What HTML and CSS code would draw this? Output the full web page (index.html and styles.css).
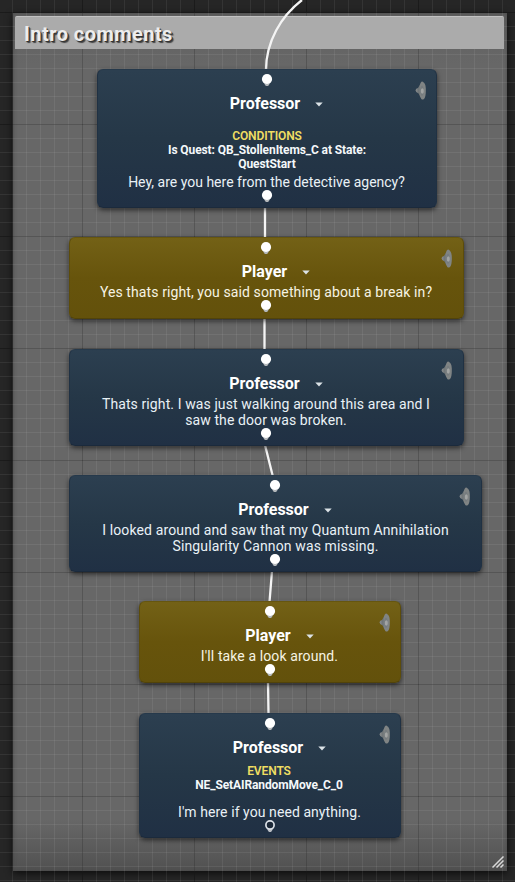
FILE: index.html
```
<!DOCTYPE html>
<html lang="en">
<head>
<meta charset="utf-8">
<title>Dialogue graph</title>
<link rel="stylesheet" href="styles.css">
</head>
<body>
<svg class="defs" width="0" height="0" aria-hidden="true">
  <defs>
    <linearGradient id="metal" x1="0" x2="1"><stop offset="0" stop-color="#8b8e8f"/><stop offset=".5" stop-color="#6c7275"/><stop offset="1" stop-color="#7b7f80"/></linearGradient>
    <symbol id="pin" viewBox="0 0 12 14"><path d="M2 8.500h8L7.600 12.500Q6 13.600 4.400 12.500Z" fill="#b4b8bb"/><circle cx="6" cy="6" r="5.1" fill="#fff"/></symbol>
    <symbol id="pin-open" viewBox="0 0 12 14"><path d="M2.500 9h7L7.500 12.500Q6 13.500 4.500 12.500Z" fill="#b9bec4"/><circle cx="6" cy="6" r="4.1" fill="#1c2938" stroke="#dce2e8" stroke-width="1.7"/></symbol>
    <symbol id="speaker" viewBox="0 0 12 20"><path d="M.5 9.300Q.8 7.300 3 7L5 3.500 7.500.8V18L5 15.500 3.600 12.600Q.8 12 .5 9.300Z" fill="url(#metal)"/><path d="M7.300.6C10.500 2 11 6 10.800 11S9.500 18.600 7.600 18.600 4.500 14.500 4.500 9.500 5.500.3 7.300.6Z" fill="#808484"/><ellipse cx="7" cy="9.800" rx="1.700" ry="5" fill="#767c7f"/><ellipse cx="7.300" cy="10" rx="1.500" ry="2.800" fill="#a3a5a4"/></symbol>
    <symbol id="caret" viewBox="0 0 8 5"><path d="M.3.600h7.400L4 4.500Z" fill="#dce3e7"/></symbol>
  </defs>
</svg>
<main class="graph">
  <section class="comment">
    <h1 class="comment-title">Intro comments</h1>
    <svg class="grip" viewBox="0 0 12 12"><path d="M.5 11.5 11.5.5M4.5 11.5l7-7M8.5 11.5l3-3" stroke="#d8d8d8" stroke-width="1.5"/></svg>
  </section>
  <div class="grid"></div>
  <svg class="wires" viewBox="0 0 515 882">
    <path d="M302 0C281 16 266 42 266 70"/>
    <path d="M265 207V238M264.500 318V350M265 445 273 477M272 571 269.500 602M268 682 268.500 714"/>
  </svg>

  <article class="node professor n1">
    <svg class="pin in"><use href="#pin"/></svg><svg class="speaker"><use href="#speaker"/></svg>
    <h2>Professor<svg class="caret"><use href="#caret"/></svg></h2>
    <div class="meta conditions"><b class="label">CONDITIONS</b><b>Is Quest: QB_StollenItems_C at State:</b><b>QuestStart</b></div>
    <p>Hey, are you here from the detective agency?</p>
    <svg class="pin out"><use href="#pin"/></svg>
  </article>

  <article class="node player n2">
    <svg class="pin in"><use href="#pin"/></svg><svg class="speaker"><use href="#speaker"/></svg>
    <h2>Player<svg class="caret"><use href="#caret"/></svg></h2>
    <p>Yes thats right, you said something about a break in?</p>
    <svg class="pin out"><use href="#pin"/></svg>
  </article>

  <article class="node professor n3">
    <svg class="pin in"><use href="#pin"/></svg><svg class="speaker"><use href="#speaker"/></svg>
    <h2>Professor<svg class="caret"><use href="#caret"/></svg></h2>
    <p>Thats right. I was just walking around this area and I<br>saw the door was broken.</p>
    <svg class="pin out"><use href="#pin"/></svg>
  </article>

  <article class="node professor n4">
    <svg class="pin in"><use href="#pin"/></svg><svg class="speaker"><use href="#speaker"/></svg>
    <h2>Professor<svg class="caret"><use href="#caret"/></svg></h2>
    <p>I looked around and saw that my Quantum Annihilation<br>Singularity Cannon was missing.</p>
    <svg class="pin out"><use href="#pin"/></svg>
  </article>

  <article class="node player n5">
    <svg class="pin in"><use href="#pin"/></svg><svg class="speaker"><use href="#speaker"/></svg>
    <h2>Player<svg class="caret"><use href="#caret"/></svg></h2>
    <p>I'll take a look around.</p>
    <svg class="pin out"><use href="#pin"/></svg>
  </article>

  <article class="node professor n6">
    <svg class="pin in"><use href="#pin"/></svg><svg class="speaker"><use href="#speaker"/></svg>
    <h2>Professor<svg class="caret"><use href="#caret"/></svg></h2>
    <div class="meta events"><b class="label">EVENTS</b><b>NE_SetAIRandomMove_C_0</b></div>
    <p>I'm here if you need anything.</p>
    <svg class="pin out"><use href="#pin-open"/></svg>
  </article>
</main>
</body>
</html>
```
FILE: styles.css
```
* { box-sizing: border-box; }
body { margin: 0; background: #262626; font-family: Roboto, "Liberation Sans", sans-serif; }
.defs { position: absolute; }
.graph {
  position: relative; width: 515px; height: 882px; overflow: hidden;
  background:
    linear-gradient(90deg, #141414 1px, transparent 1px) 82px 0 / 112px 100%,
    linear-gradient(#141414 1px, transparent 1px) 0 12px / 100% 112px,
    #262626;
}

.comment {
  position: absolute; left: 13px; top: 13px; width: 494px; height: 858px;
  padding: 3px 3px 0 2px;
  background: linear-gradient(#606060, #676767 6%, #676767 94%, #515151);
  box-shadow: inset 0 0 4px #484848, 0 2px 7px #0b0b0b;
}
.comment-title {
  margin: 0; height: 33px; padding-left: 9px;
  background: #ababab; border-top: 1px solid #c2c2c2; border-radius: 2px 2px 0 0;
  color: #ededed; font-size: 20px; line-height: 35px; font-weight: 700; letter-spacing: .45px;
  text-shadow: 1px 1px 0 #333, 2px 2px 1px #444;
}
.grip { position: absolute; right: 3px; bottom: 3px; width: 12px; height: 12px; }

/* 14px cells with a darker line every eighth cell */
.grid {
  position: absolute; inset: 0;
  background-image:
    linear-gradient(90deg, rgba(0,0,0,.25) 1px, transparent 1px),
    linear-gradient(rgba(0,0,0,.25) 1px, transparent 1px),
    linear-gradient(90deg, rgba(255,255,255,.065) 1px, transparent 1px),
    linear-gradient(rgba(255,255,255,.065) 1px, transparent 1px);
  background-size: 112px 100%, 100% 112px, 14px 100%, 100% 14px;
  background-position: 82px 0, 0 12px, 12px 0, 0 12px;
  clip-path: polygon(0 0, 100% 0, 100% 100%, 0 100%, 0 49px, 504px 49px, 504px 16px, 15px 16px, 15px 49px, 0 49px);
}
.wires { position: absolute; inset: 0; width: 515px; height: 882px; fill: none; stroke: #f4f4f4; stroke-width: 2.3; }

.node {
  position: absolute; padding-top: 25px;
  border: 1px solid; border-radius: 6px;
  box-shadow: 0 2px 5px rgba(0,0,0,.6);
  color: #e9f1f6; text-align: center;
}
.professor { background: linear-gradient(#2c3f50, #253747 50%, #203044); border-color: #26394b #203143 #1b2a3c; }
.player { background: linear-gradient(#736116, #67540c 50%, #63510b); border-color: #66560f #5c4c0a #51430a; color: #f6f3e3; }
.n1 { left: 97px; top: 69px; width: 340px; height: 139px; }
.n2 { left: 69px; top: 237px; width: 395px; height: 82px; }
.n3 { left: 69px; top: 349px; width: 395px; height: 97px; }
.n4 { left: 69px; top: 475px; width: 413px; height: 97px; }
.n5 { left: 139px; top: 601px; width: 262px; height: 82px; }
.n6 { left: 139px; top: 713px; width: 262px; height: 125px; }

.node h2 {
  display: flex; justify-content: center; align-items: center; gap: 15px;
  margin: 0; padding-left: 19px; height: 18px;
  color: #fff; font-size: 16px; line-height: 18px; font-weight: 700;
}
.caret { width: 8px; height: 5px; margin-top: 1px; }
.node p { margin: 3px 0 0; padding-right: 1px; font-size: 14px; line-height: 16px; letter-spacing: .1px; white-space: nowrap; }
.meta { display: flex; flex-direction: column; align-items: center; padding-right: 2px; color: #f4f8fa; font-size: 12px; line-height: 14px; letter-spacing: -.1px; }
.label { color: #f0de62; font-weight: 600; }
.conditions { margin-top: 16px; padding-right: 0; }
.n1 p { margin-top: 3px; letter-spacing: 0; }
.n4 p { padding-right: 0; letter-spacing: .13px; }
.events { margin-top: 7px; }
.n6 p { margin-top: 12px; letter-spacing: .07px; }

.pin { position: absolute; left: calc(50% - 6px); width: 12px; height: 14px; }
.in { top: 3px; }
.out { bottom: 4px; }
.n2 .pin, .n3 .pin, .n4 .pin { left: calc(50% - 6.5px); }
.n2 .out, .n5 .out { bottom: 5px; }
.speaker { position: absolute; right: 9px; top: 11px; width: 12px; height: 20px; }
.n2 .speaker, .n3 .speaker, .n4 .speaker { right: 10px; }
```
